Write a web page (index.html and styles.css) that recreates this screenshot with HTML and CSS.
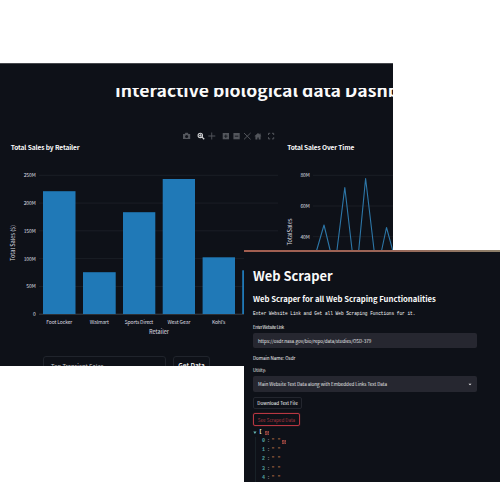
FILE: index.html
```html
<!DOCTYPE html>
<html lang="en">
<head>
<meta charset="utf-8">
<title>Dashboard and Web Scraper</title>
<link rel="stylesheet" href="styles.css">
</head>
<body>
<main class="desktop">
  <section class="window dashboard">
    <header class="masthead"><h1>Interactive biological data Dashboard</h1></header>
    <svg class="charts" viewBox="0 0 393 242" width="393" height="242">
      <g class="tools" transform="translate(0 -124)">
        <path d="M183 134h1.7l.7-1.2h2.4l.7 1.2h1.7v5h-7.200z"/><circle class="lens" cx="186.600" cy="136.400" r="1.500"/>
        <g class="active"><circle class="ring" cx="200.300" cy="135.400" r="2.200"/><path d="M199 135h2.600v.8H199zM199.900 134.100h.8v2.600h-.8zM202 136.300l2.700 2.500-1 .9-2.500-2.600z"/></g>
        <path d="M211.300 132.500h.9v3h3.100v.9h-3.100v3.200h-.9v-3.200h-3v-.9h3z"/>
        <path d="M222.700 133h6.300v6.300h-6.300z"/><path class="cut" d="M224.100 135.700h3.500v.9h-3.500zM225.400 134.400h.9v3.500h-.9z"/>
        <path d="M233.400 133h6.300v6.300h-6.300z"/><path class="cut" d="M234.800 135.700h3.500v.9h-3.500z"/>
        <path class="cross" d="M244 133l6.600 6.400M250.600 133l-6.600 6.400"/>
        <path d="M254.300 136.200l3.700-3.100 1.600 1.300v-1h1v1.900l.9.900h-.9v3.200h-1.900v-2h-1.300v2h-2v-3.200z"/>
        <path class="cross" d="M268.500 135v-1.700h1.700M272 133.300h1.700v1.700M273.700 137.200v1.700H272M270.200 138.900h-1.700v-1.700"/>
      </g>
      <g transform="translate(0 -124)">
        <text class="heading" x="10.700" y="149.700" textLength="69">Total Sales by Retailer</text>
        <path class="grid" d="M39 175.300H278M39 203.100H278M39 230.800H278M39 258.600H278M39 286.500H278"/>
        <path class="axis" d="M39 314.200H278"/>
        <g class="bars"><rect x="43" y="191.200" width="32.500" height="122.800"/><rect x="83" y="272.200" width="32.700" height="41.800"/><rect x="123" y="212.200" width="32.300" height="101.800"/><rect x="162.700" y="179" width="32.300" height="135"/><rect x="202.600" y="257.300" width="32.400" height="56.700"/><rect x="242.200" y="270.300" width="32.400" height="43.700"/></g>
        <g class="tick end"><text x="35.700" y="177.200" textLength="12">250M</text><text x="35.700" y="205" textLength="12">200M</text><text x="35.700" y="232.800" textLength="12">150M</text><text x="35.700" y="260.600" textLength="12">100M</text><text x="35.700" y="288.400" textLength="9.500">50M</text><text x="35.700" y="316.100">0</text></g>
        <g class="tick mid"><text x="59.300" y="323.600" textLength="26">Foot Locker</text><text x="99.300" y="323.600" textLength="19">Walmart</text><text x="139" y="323.600" textLength="28.500">Sports Direct</text><text x="178.900" y="323.600" textLength="23">West Gear</text><text x="218.700" y="323.600" textLength="13.500">Kohl's</text></g>
        <g class="name mid"><text x="159" y="334.300" textLength="20">Retailer</text><text transform="translate(15.300 242.900) rotate(-90)" textLength="36">Total Sales ($)</text><text transform="translate(291.600 232) rotate(-90)" textLength="27">TotalSales</text></g>
        <text class="heading" x="287.300" y="149.700" textLength="67">Total Sales Over Time</text>
        <path class="grid" d="M313 175.300H393M313 206H393M313 236.700H393"/>
        <g class="tick end"><text x="309.800" y="177.300" textLength="9.300">80M</text><text x="309.800" y="208" textLength="9.300">60M</text><text x="309.800" y="238.700" textLength="9.300">40M</text></g>
        <path class="series" d="M315 256L324 225L332 258L336 258L344.800 187.500L353 258L358 258L365.600 178.500L375 258L380 258L386.500 227.500L394 255"/>
      </g>
    </svg>
    <div class="query"><div class="picker">Top Transient Sales</div><div class="fetch">Get Data</div></div>
  </section>

  <section class="window scraper">
    <h2>Web Scraper</h2>
    <h3>Web Scraper for all Web Scraping Functionalities</h3>
    <p class="intro">Enter Website Link and Get all Web Scraping Functions for it.</p>
    <p class="label link">Enter Website Link</p>
    <div class="field url"><span>https://osdr.nasa.gov/bio/repo/data/studies/OSD-379</span></div>
    <p class="domain">Domain Name: Osdr</p>
    <p class="label utility">Utility:</p>
    <div class="field select"><span>Main Website Text Data along with Embedded Links Text Data</span><svg width="4" height="3" viewBox="0 0 4 3"><path d="M.5.7h3L2 2.300z"/></svg></div>
    <div class="button download">Download Text File</div>
    <div class="button scrape">See Scraped Data</div>
    <div class="tree">
      <div class="root"><svg width="4" height="4" viewBox="0 0 4 4"><path d="M.3.6h3.200L1.900 3z"/></svg><b>[</b><i class="copy"></i></div>
      <ol>
        <li><span>0</span><em>:</em><q>"</q><q>"</q><i class="copy"></i></li>
        <li><span>1</span><em>:</em><q>"</q><q>"</q></li>
        <li><span>2</span><em>:</em><q>"</q><q>"</q></li>
        <li><span>3</span><em>:</em><q>"</q><q>"</q></li>
        <li><span>4</span><em>:</em><q>"</q><q>"</q></li>
      </ol>
    </div>
  </section>
</main>
</body>
</html>
```
FILE: styles.css
```css
* { box-sizing: border-box; }
body, h1, h2, h3, p, ol { margin: 0; padding: 0; }
body { background: #fff; font-family: "Noto Sans CJK SC", "Noto Sans", sans-serif; color: #fafafa; }
.desktop { position: relative; width: 500px; height: 500px; overflow: hidden; }
.window { position: absolute; overflow: hidden; background: #0e1118; }

/* Sales dashboard */
.dashboard { left: 0; top: 63px; width: 393px; height: 303px; border-top: 1px solid #46484d; }
.masthead { height: 36px; margin-top: 24px; overflow: hidden; }
h1 { margin: -10px 0 0 115px; font-size: 17.600px; line-height: 24px; font-weight: 700; white-space: nowrap; }
.charts { display: block; }
.charts text { fill: #dedfe2; }
.tools { fill: #53565c; }
.tools .lens, .tools .cut { fill: #11141b; }
.tools .active { fill: #d0d1d3; }
.tools .ring { fill: none; stroke: #d0d1d3; stroke-width: 1.1; }
.tools .cross { fill: none; stroke: #53565c; stroke-width: 1; }
.charts .heading { font-size: 6.600px; font-weight: 700; fill: #fafafa; }
.tick { font-size: 5px; }
.name { font-size: 5.600px; }
.end { text-anchor: end; }
.mid { text-anchor: middle; }
.grid { stroke: #20242b; stroke-width: .7; }
.axis { stroke: #474b51; stroke-width: .8; }
.bars { fill: #2079b7; }
.series { fill: none; stroke: #2d77a8; stroke-width: 1.100; stroke-linejoin: round; }
.query { display: flex; gap: 7px; margin: -10px 0 0 43px; }
.query div { height: 20px; border: 1px solid #20242c; border-radius: 3px; line-height: 19px; white-space: nowrap; }
.picker { width: 123px; padding-left: 7px; font-size: 5.800px; color: #c8c9cb; }
.query .fetch { width: 37px; text-align: center; font-size: 6.500px; font-weight: 500; line-height: 17px; }

/* Scraper */
.scraper { left: 244px; top: 250px; width: 256px; height: 232px; padding-left: 9px; }
.scraper::before { content: ""; display: block; height: 2px; margin-left: -9px; background: linear-gradient(90deg, #a25e50, #9a6557 55%, #8c806a); }
h2 { margin-top: 12px; font-size: 12.900px; line-height: 24px; font-weight: 700; }
h3 { margin-top: 5px; font-size: 7.700px; line-height: 12px; font-weight: 700; white-space: nowrap; }
.intro { margin-top: 6px; font: 4.450px/6px "Liberation Mono", monospace; white-space: nowrap; }
.label { font-size: 4.200px; line-height: 6px; white-space: nowrap; }
.link { margin-top: 7px; letter-spacing: -.3px; }
.field { display: flex; align-items: center; justify-content: space-between; width: 224px; padding: 0 5px; background: #262730; border-radius: 2px; font-size: 4.550px; white-space: nowrap; color: #e7e7ea; }
.url { height: 15px; margin-top: 3px; }
.domain { margin-top: 6px; font-size: 4.500px; line-height: 8px; }
.utility { margin-top: 5px; }
.select { height: 16px; margin-top: 3px; }
.select svg { fill: #eee; }
.button { display: flex; align-items: center; justify-content: center; border: 1px solid #23262e; border-radius: 2px; font-size: 4.600px; white-space: nowrap; }
.download { width: 49px; height: 12px; margin-top: 5px; }
.scrape { width: 47px; height: 13px; margin-top: 4px; border-color: #b83742; color: #a9343e; box-shadow: 0 0 1px #a9343e; }
.tree { margin-top: 2px; font: 700 5px/9px "Liberation Mono", monospace; }
.root { display: flex; align-items: center; height: 9px; }
.root svg { fill: #66b8b5; }
.root b { width: 6px; margin-left: 2px; }
.copy { width: 4px; height: 4px; background: #66302f; border: 1px dotted #91443d; }
ol { margin-left: 2px; padding-left: 6px; list-style: none; border-left: 1px solid #182127; }
li { display: flex; align-items: center; height: 9.200px; }
li span { width: 5px; color: #56a6a4; }
li em { width: 3px; font-style: normal; color: #aaa; }
q { width: 6px; color: #b66a43; text-align: center; }
q::before, q::after { content: none; }
```
